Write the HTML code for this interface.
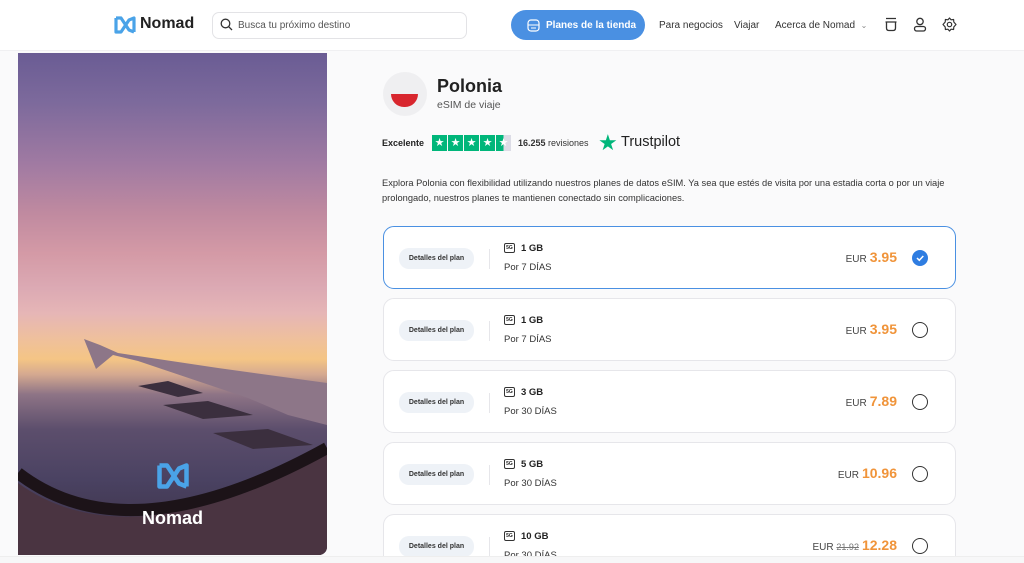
<!DOCTYPE html>
<html><head><meta charset="utf-8"><style>
*{box-sizing:border-box;margin:0;padding:0}
html,body{width:1024px;height:563px;overflow:hidden}
body{background:#fafafb;font-family:"Liberation Sans",sans-serif;color:#222;position:relative}
.hdr{position:absolute;left:0;top:0;width:1024px;height:51px;background:#fff;border-bottom:1px solid #f0f0f2}
.abs{position:absolute}
.search{left:212px;top:12px;width:255px;height:27px;border:1px solid #e3e3e6;border-radius:7px;background:#fff;font-size:10px;color:#555;padding:7px 0 0 25px}
.btn{left:511px;top:10px;width:134px;height:30px;border-radius:15px;background:#4a90e2;color:#fff;font-size:10px;font-weight:bold;padding:10px 0 0 35px}
.nav{top:20px;font-size:10px;color:#333}
.img{left:18px;top:53px;width:309px;height:502px;border-radius:0 0 8px 0;overflow:hidden;
background:linear-gradient(180deg,#6a5c94 0%,#7d6a9c 10%,#a07aa2 22%,#c08aa0 32%,#d49aa6 40%,#dcaab4 47%,#e6b6b6 52%,#efc09c 57%,#f4c585 61%,#d5a990 64%,#8e7486 68%,#5c4e6c 75%,#4a4262 85%,#3a2e40 100%)}
.card{position:absolute;left:383px;width:573px;height:63px;background:#fff;border:1px solid #e6e6ea;border-radius:11px}
.card.sel{border:1.5px solid #4a90e2}
.pill{position:absolute;left:15px;top:21px;width:75px;height:21px;border-radius:10px;background:#eef2f7;font-size:7px;font-weight:bold;color:#333;text-align:center;line-height:21px}
.sep{position:absolute;left:105px;top:22px;width:1px;height:20px;background:#e6e6ea}
.gb{position:absolute;left:120px;top:16px;font-size:9.5px;font-weight:bold}
.gb i{display:inline-block;width:11px;height:10px;border:1px solid #333;border-radius:2px;font-size:5px;font-style:normal;text-align:center;line-height:8px;margin-right:6px;vertical-align:middle}
.days{position:absolute;left:120px;top:35px;font-size:9.5px;color:#333}
.price{position:absolute;right:58px;top:22px;font-size:10px;color:#444}
.price b{color:#f0943a;font-size:14px;margin-left:3px}
.rad{position:absolute;left:528px;top:23px;width:16px;height:16px;border:1.3px solid #333;border-radius:50%}
.rad.on{background:#2f7de1;border-color:#2f7de1}
</style></head><body>
<div class="hdr">
<svg class="abs" style="left:113px;top:15px" width="24" height="20" viewBox="0 0 24 20"><path d="M3 3 L3 17 L8 17 L16 5 L21 3 L21 17 M3 3 L8 3 L16 15 L21 17" fill="none" stroke="#4aa3e8" stroke-width="3.2" stroke-linejoin="round"/></svg>
<div class="abs" style="left:140px;top:15px;font-size:16px;font-weight:bold;color:#222">Nomad</div>
<div class="abs search">Busca tu próximo destino</div>
<svg class="abs" style="left:220px;top:18px" width="13" height="13"><circle cx="5.5" cy="5.5" r="4.3" fill="none" stroke="#333" stroke-width="1.3"/><path d="M8.7 8.7 L12 12" stroke="#333" stroke-width="1.3"/></svg>
<div class="abs btn">Planes de la tienda</div>
<svg class="abs" style="left:527px;top:19px" width="13" height="13"><rect x="1" y="1" width="11" height="11" rx="3" fill="none" stroke="#fff" stroke-width="1.2"/><path d="M1 6 H12 M4 9 H9" stroke="#fff" stroke-width="1.1"/></svg>
<div class="abs nav" style="left:659px">Para negocios</div>
<div class="abs nav" style="left:734px">Viajar</div>
<div class="abs nav" style="left:775px">Acerca de Nomad &nbsp;<span style="font-size:8px;color:#888">⌄</span></div>
<svg class="abs" style="left:884px;top:17px" width="14" height="15"><path d="M2 1.5 H12 M1.5 5 H12.5 M2.5 5 V11 Q2.5 13.5 5 13.5 H9 Q11.5 13.5 11.5 11 V5" fill="none" stroke="#333" stroke-width="1.3"/></svg>
<svg class="abs" style="left:913px;top:17px" width="14" height="15"><circle cx="7" cy="4.5" r="3.2" fill="none" stroke="#333" stroke-width="1.3"/><rect x="1.5" y="9.5" width="11" height="4.5" rx="2.2" fill="none" stroke="#333" stroke-width="1.3"/></svg>
<svg class="abs" style="left:942px;top:17px" width="15" height="15" viewBox="0 0 15 15"><circle cx="7.5" cy="7.5" r="2.2" fill="none" stroke="#333" stroke-width="1.2"/><path d="M7.5 1 L9 2.8 L11.6 2.5 L11.8 5 L14 7.5 L11.8 10 L11.6 12.5 L9 12.2 L7.5 14 L6 12.2 L3.4 12.5 L3.2 10 L1 7.5 L3.2 5 L3.4 2.5 L6 2.8 Z" fill="none" stroke="#333" stroke-width="1.2" stroke-linejoin="round"/></svg>
</div>

<div class="abs img">
<svg class="abs" style="left:0;top:0" width="309" height="502" viewBox="0 0 309 502">
<path d="M66 286 L82 292 L100 300 L200 315 L309 330 L309 372 L270 362 L230 345 L120 308 L95 302 L78 316 Z" fill="#8d7688"/>
<path d="M120 333 L150 328 L185 340 L160 344 Z M145 352 L190 348 L235 362 L185 366 Z M195 380 L250 376 L295 392 L235 396 Z" fill="#3b2f3e"/>
<path d="M0 430 Q110 510 309 400 L309 502 L0 502 Z" fill="#4a3441"/>
<path d="M0 420 Q110 505 309 395" fill="none" stroke="#1c1318" stroke-width="12"/>
</svg>
<svg class="abs" style="left:137px;top:407px" width="36" height="32" viewBox="0 0 24 20"><path d="M3 3 L3 17 L8 17 L16 5 L21 3 L21 17 M3 3 L8 3 L16 15 L21 17" fill="none" stroke="#4aa3e8" stroke-width="3" stroke-linejoin="round"/></svg>
<div class="abs" style="left:0;width:309px;text-align:center;top:455px;color:#fff;font-size:18px;font-weight:bold">Nomad</div>
</div>

<div class="abs" style="left:383px;top:72px;width:44px;height:44px;border-radius:50%;background:#efeff1"></div>
<div class="abs" style="left:391px;top:94px;width:27px;height:13px;border-radius:0 0 14px 14px;background:#d8262e"></div>
<div class="abs" style="left:437px;top:76px;font-size:18px;font-weight:bold;color:#222">Polonia</div>
<div class="abs" style="left:437px;top:99px;font-size:10.5px;color:#555">eSIM de viaje</div>
<div class="abs" style="left:382px;top:138px;font-size:9px;font-weight:bold">Excelente</div>
<div class="abs" style="left:432px;top:135px;display:flex;gap:1px">
<span style="width:15px;height:16px;background:#00b67a;color:#fff;font-size:11px;text-align:center;line-height:16px">★</span><span style="width:15px;height:16px;background:#00b67a;color:#fff;font-size:11px;text-align:center;line-height:16px">★</span><span style="width:15px;height:16px;background:#00b67a;color:#fff;font-size:11px;text-align:center;line-height:16px">★</span><span style="width:15px;height:16px;background:#00b67a;color:#fff;font-size:11px;text-align:center;line-height:16px">★</span><span style="width:15px;height:16px;background:linear-gradient(90deg,#00b67a 50%,#dcdce6 50%);color:#fff;font-size:11px;text-align:center;line-height:16px">★</span></div>
<div class="abs" style="left:518px;top:138px;font-size:9px;color:#333"><b>16.255</b> revisiones</div>
<div class="abs" style="left:598px;top:130px;font-size:22px;color:#00b67a">★</div>
<div class="abs" style="left:621px;top:134px;font-size:14.5px;color:#222">Trustpilot</div>
<div class="abs" style="left:382px;top:176px;width:580px;font-size:9.3px;line-height:15px;color:#333">Explora Polonia con flexibilidad utilizando nuestros planes de datos eSIM. Ya sea que estés de visita por una estadia corta o por un viaje prolongado, nuestros planes te mantienen conectado sin complicaciones.</div>

<div class="card sel" style="top:226px"><div class="pill">Detalles del plan</div><div class="sep"></div><div class="gb"><i>5G</i>1 GB</div><div class="days">Por 7 DÍAS</div><div class="price">EUR<b>3.95</b></div><div class="rad on"><svg width="14" height="14" style="position:absolute;left:0;top:0"><path d="M4 7 L6.3 9.3 L10.3 5" fill="none" stroke="#fff" stroke-width="1.5"/></svg></div></div>
<div class="card" style="top:298px"><div class="pill">Detalles del plan</div><div class="sep"></div><div class="gb"><i>5G</i>1 GB</div><div class="days">Por 7 DÍAS</div><div class="price">EUR<b>3.95</b></div><div class="rad"></div></div>
<div class="card" style="top:370px"><div class="pill">Detalles del plan</div><div class="sep"></div><div class="gb"><i>5G</i>3 GB</div><div class="days">Por 30 DÍAS</div><div class="price">EUR<b>7.89</b></div><div class="rad"></div></div>
<div class="card" style="top:442px"><div class="pill">Detalles del plan</div><div class="sep"></div><div class="gb"><i>5G</i>5 GB</div><div class="days">Por 30 DÍAS</div><div class="price">EUR<b>10.96</b></div><div class="rad"></div></div>
<div class="card" style="top:514px;height:49px;border-bottom:none;border-radius:11px 11px 0 0"><div class="pill">Detalles del plan</div><div class="sep"></div><div class="gb"><i>5G</i>10 GB</div><div class="days">Por 30 DÍAS</div><div class="price">EUR <s style="color:#777;font-size:9px">21.92</s><b>12.28</b></div><div class="rad"></div></div>
<div class="abs" style="left:0;top:556px;width:1024px;height:7px;background:#f7f7f8;border-top:1px solid #eee"></div>
</body></html>
